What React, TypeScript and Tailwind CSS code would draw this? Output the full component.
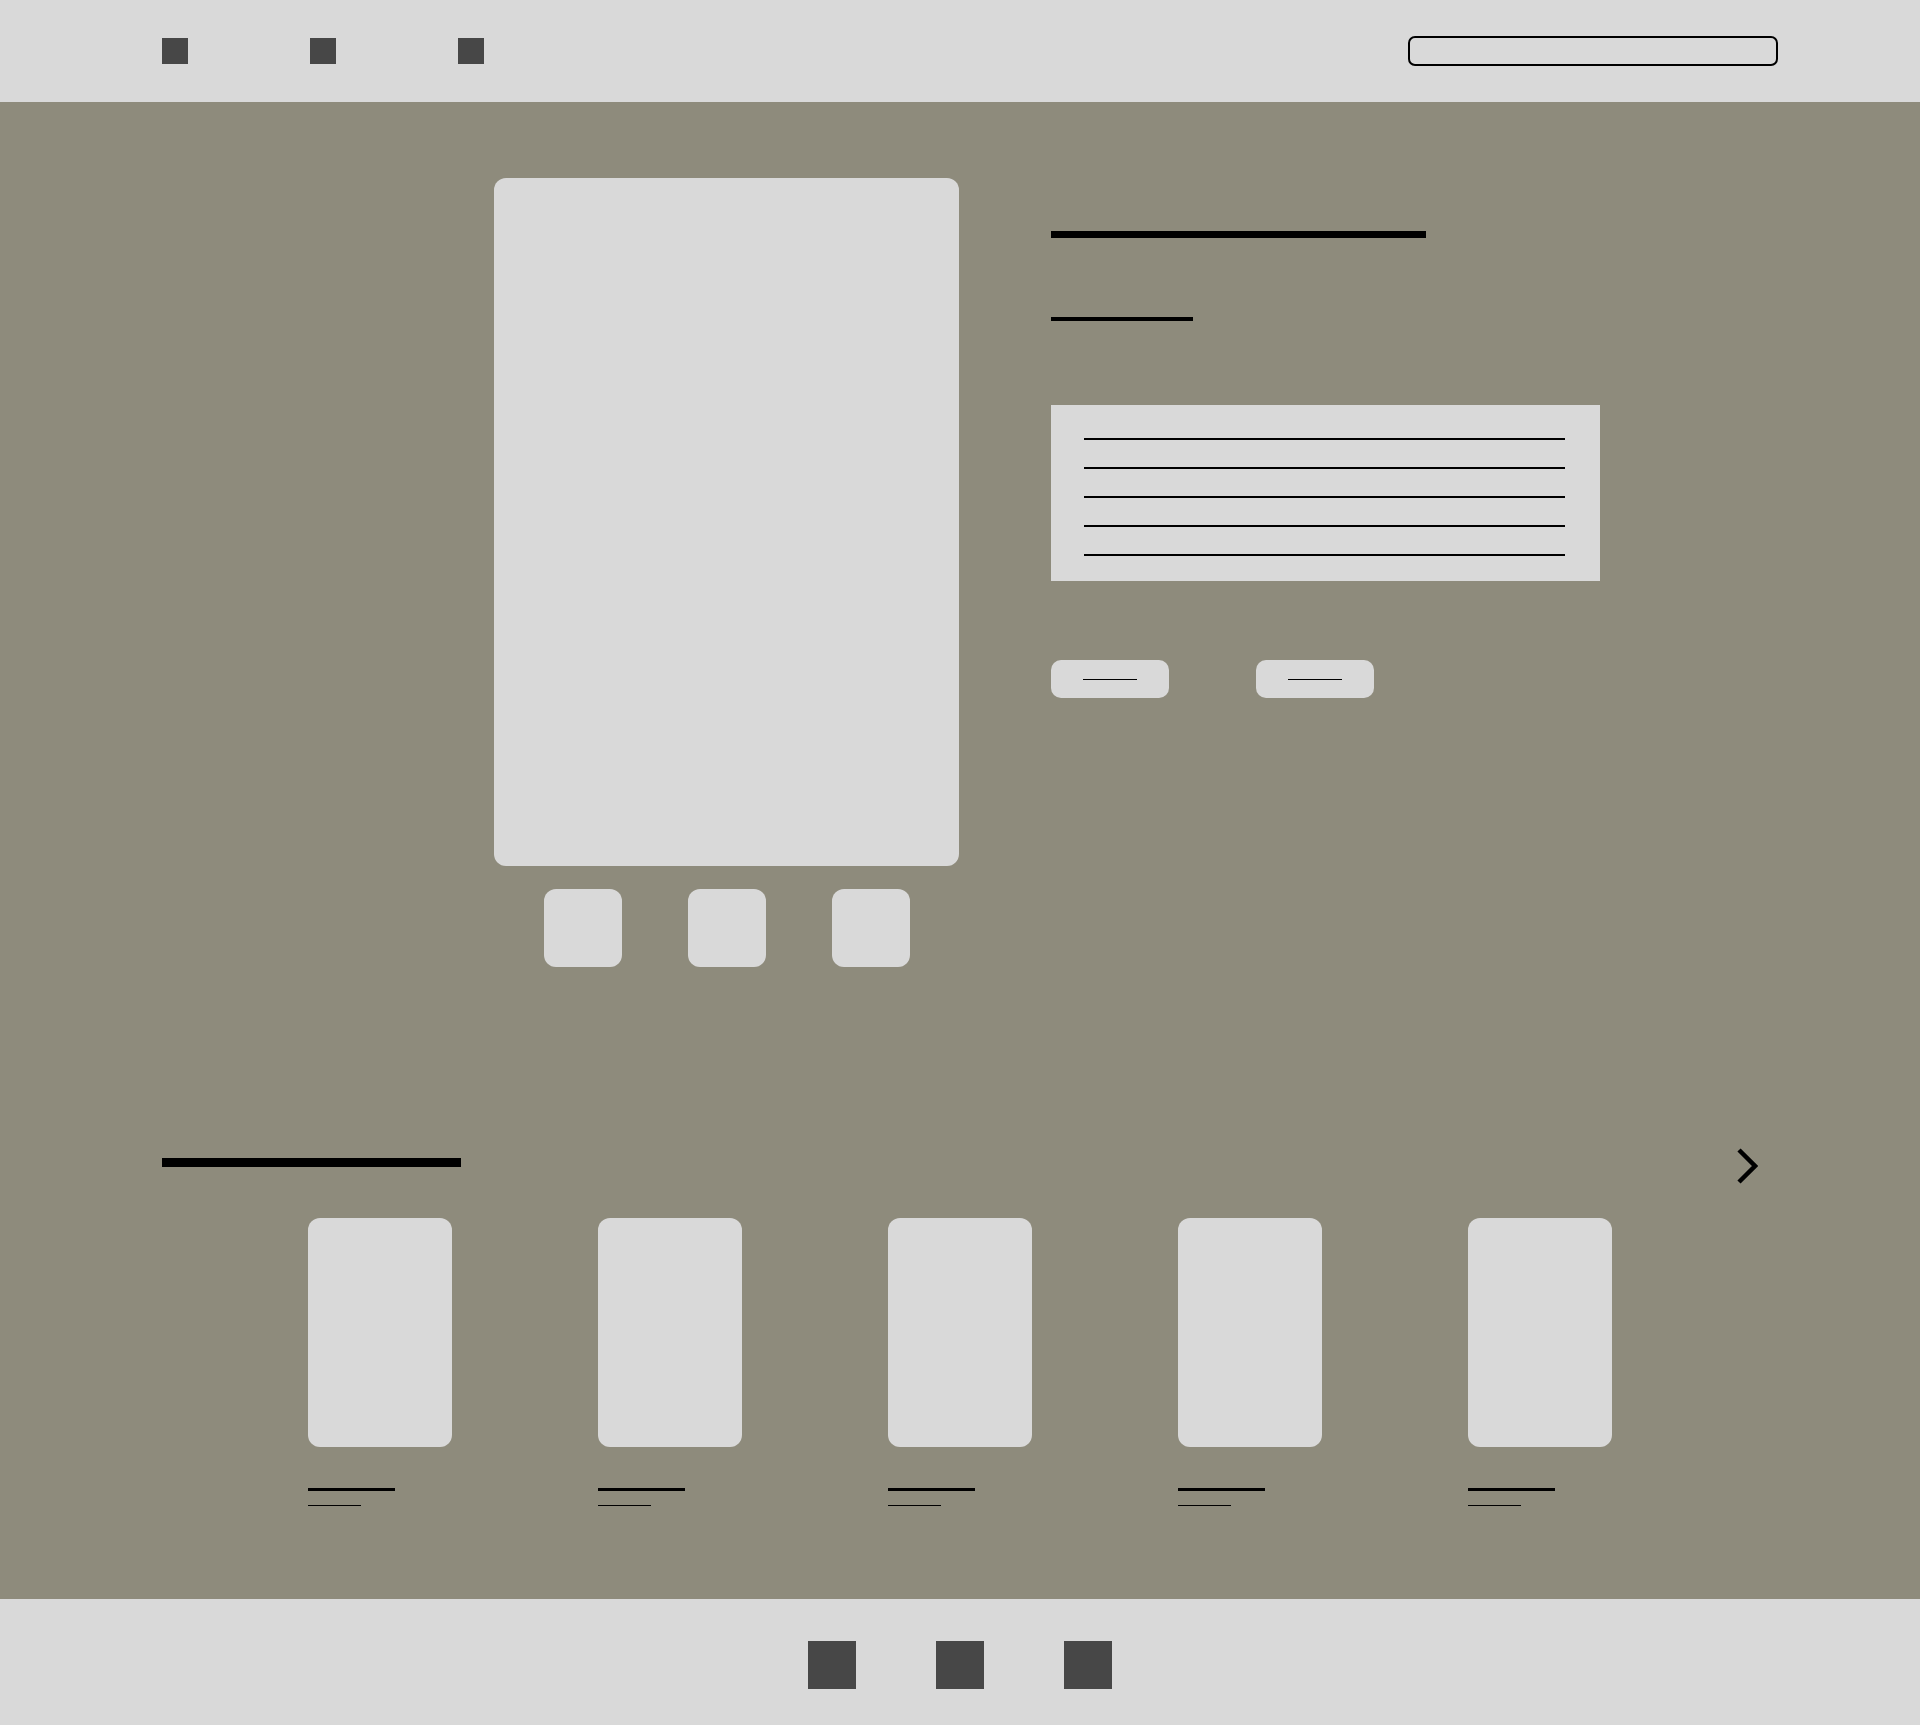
import React from "react";

// wireframe product page: header nav, product detail, related items, footer

const navItems = [0, 1, 2];
const descLines = [0, 1, 2, 3, 4];
const thumbs = [0, 1, 2];
const related = [0, 1, 2, 3, 4];

function ChevronRight() {
  return (
    <svg width="22" height="36" viewBox="0 0 22 36" fill="none" aria-hidden="true">
      <polyline points="3,2 19,18 3,34" stroke="#000" strokeWidth="4.5" />
    </svg>
  );
}

export default function App() {
  return (
    <div className="w-[1920px] min-h-[1725px] flex flex-col font-['Liberation_Sans',sans-serif]">
      {/* 헤더 */}
      <header className="h-[102px] bg-[#d9d9d9] flex items-center justify-between pl-[162px] pr-[142px]">
        <nav className="flex items-center gap-[122px]">
          {navItems.map((i) => (
            <a key={i} href="#" aria-label={`menu ${i + 1}`} className="block w-[26px] h-[26px] bg-[#474747]" />
          ))}
        </nav>
        <input
          type="text"
          aria-label="search"
          className="w-[370px] h-[30px] rounded-[7px] border-[2.5px] border-black bg-transparent outline-none"
        />
      </header>

      {/* 본문 */}
      <main className="flex-1 bg-[#8e8b7c] pt-[76px] pb-[92px]">
        <section className="flex items-start pl-[494px] gap-[92px]">
          <div className="flex flex-col items-center">
            <div className="w-[465px] h-[688px] rounded-xl bg-[#d9d9d9]" />
            <div className="mt-[23px] flex gap-[66px]">
              {thumbs.map((i) => (
                <button key={i} type="button" className="w-[78px] h-[78px] rounded-xl bg-[#d9d9d9]" />
              ))}
            </div>
          </div>

          <div className="flex flex-col">
            <div className="mt-[53px] w-[375px] h-[7px] bg-black" />
            <div className="mt-[79px] w-[142px] h-[4px] bg-black" />
            <div className="mt-[84px] w-[549px] h-[176px] bg-[#d9d9d9] pt-[33px] pl-[33px] pr-[35px] flex flex-col gap-[27px]">
              {descLines.map((i) => (
                <div key={i} className="h-[2px] bg-black" />
              ))}
            </div>
            <div className="mt-[79px] flex gap-[87px]">
              {[0, 1].map((i) => (
                <button
                  key={i}
                  type="button"
                  className="w-[118px] h-[38px] rounded-[10px] bg-[#d9d9d9] flex items-center justify-center"
                >
                  <span className="block w-[54px] h-px bg-black" />
                </button>
              ))}
            </div>
          </div>
        </section>

        {/* 관련 상품 */}
        <section className="mt-[182px] px-[162px]">
          <div className="flex items-start justify-between h-[34px]">
            <div className="mt-[9px] w-[299px] h-[9px] bg-black" />
            <button type="button" aria-label="next" className="-mt-px">
              <ChevronRight />
            </button>
          </div>
          <div className="mt-[35px] flex justify-center gap-[146px]">
            {related.map((i) => (
              <div key={i} className="w-[144px] flex flex-col">
                <div className="h-[229px] rounded-xl bg-[#d9d9d9]" />
                <div className="mt-[41px] w-[87px] h-[3px] bg-black" />
                <div className="mt-[14px] w-[53px] h-px bg-black" />
              </div>
            ))}
          </div>
        </section>
      </main>

      {/* 푸터 */}
      <footer className="h-[126px] bg-[#d9d9d9] flex items-center justify-center gap-[80px] pt-[6px]">
        {navItems.map((i) => (
          <a key={i} href="#" aria-label={`link ${i + 1}`} className="block w-[48px] h-[48px] bg-[#474747]" />
        ))}
      </footer>
    </div>
  );
}
